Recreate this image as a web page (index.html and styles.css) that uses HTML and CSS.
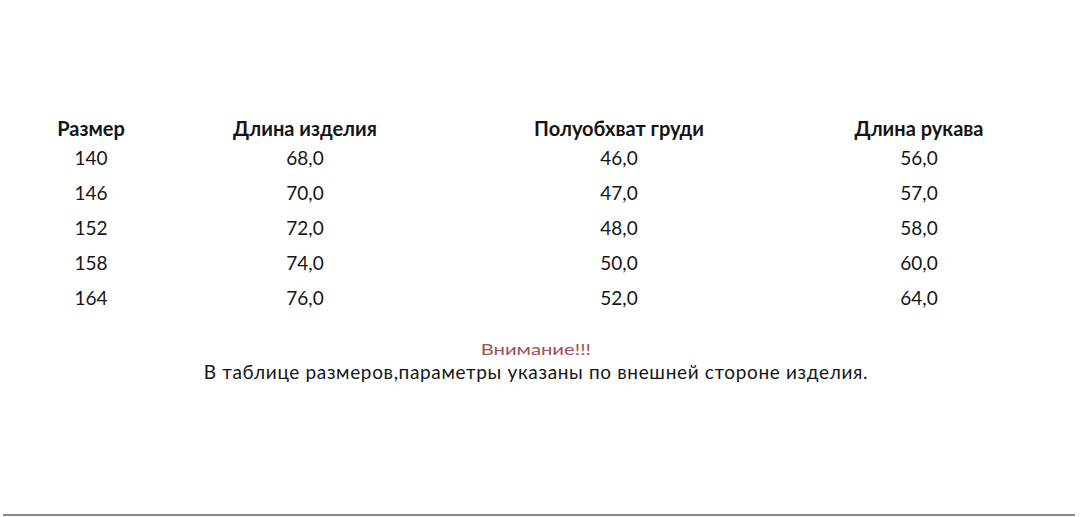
FILE: index.html
```html
<!DOCTYPE html>
<html lang="ru">
<head>
<meta charset="utf-8">
<link rel="stylesheet" href="styles.css">
</head>
<body>
<div class="page">
  <div class="table">
    <div class="row head">
      <div class="cell">Размер</div>
      <div class="cell">Длина изделия</div>
      <div class="cell">Полуобхват груди</div>
      <div class="cell">Длина рукава</div>
    </div>
    <div class="row"><div class="cell">140</div><div class="cell">68,0</div><div class="cell">46,0</div><div class="cell">56,0</div></div>
    <div class="row"><div class="cell">146</div><div class="cell">70,0</div><div class="cell">47,0</div><div class="cell">57,0</div></div>
    <div class="row"><div class="cell">152</div><div class="cell">72,0</div><div class="cell">48,0</div><div class="cell">58,0</div></div>
    <div class="row"><div class="cell">158</div><div class="cell">74,0</div><div class="cell">50,0</div><div class="cell">60,0</div></div>
    <div class="row"><div class="cell">164</div><div class="cell">76,0</div><div class="cell">52,0</div><div class="cell">64,0</div></div>
  </div>
  <div class="note">
    <div class="warn"><span class="warn-inner">Внимание!!!</span></div>
    <div class="text">В таблице размеров,параметры указаны по внешней стороне изделия.</div>
  </div>
  <div class="rule"></div>
</div>
</body>
</html>
```
FILE: styles.css
```css
html, body {
  margin: 0;
  padding: 0;
  background: #ffffff;
}
.page {
  width: 1080px;
  height: 517px;
  display: flex;
  flex-direction: column;
  font-family: Lato, "Noto Sans", sans-serif;
  color: #151515;
  box-sizing: border-box;
  padding-top: 116px;
}
.table {
  display: flex;
  flex-direction: column;
}
.row {
  display: grid;
  grid-template-columns: 150px 278px 350px 250px;
  padding-left: 16px;
  font-size: 19px;
  line-height: 35px;
}
.row.head {
  font-size: 20px;
  font-weight: 700;
  line-height: 24px;
}
.cell {
  text-align: center;
}
.note {
  margin-top: 23px;
  padding-right: 8px;
  text-align: center;
}
.warn {
  color: #a24f55;
  font-size: 15px;
  line-height: 22px;
}
.warn-inner {
  display: inline-block;
  transform: scaleX(1.35);
}
.text {
  font-size: 19px;
  letter-spacing: 0.65px;
  line-height: 24px;
}
.rule {
  margin-top: auto;
  margin-left: 3px;
  margin-right: 5px;
  height: 2px;
  background: #8a8a8a;
  margin-bottom: 1px;
}
```
